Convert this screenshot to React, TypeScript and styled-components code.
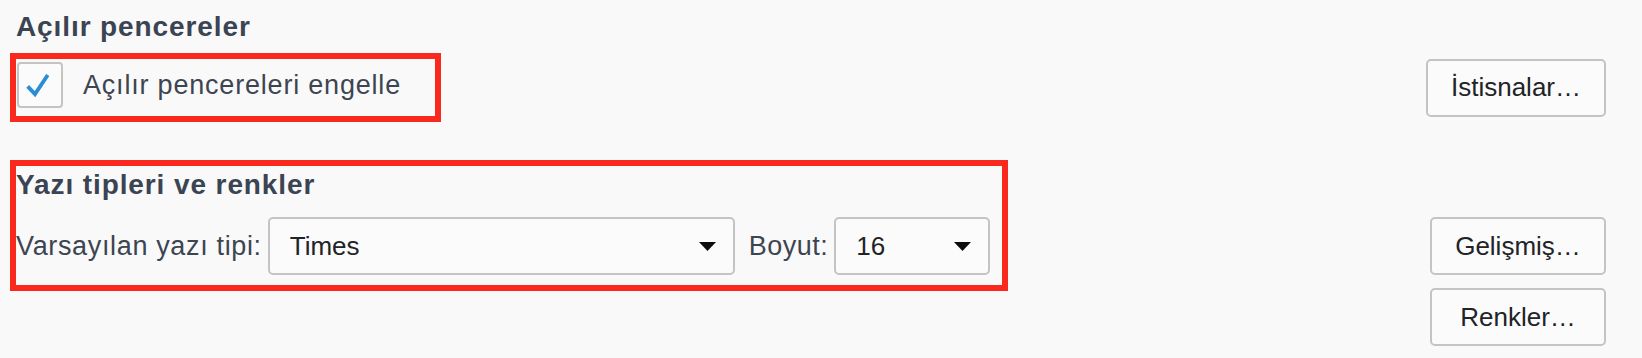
import styled, { createGlobalStyle } from "styled-components";

const GlobalStyle = createGlobalStyle`
  body {
    margin: 0;
    background: #f9f9fa;
    font-family: "Liberation Sans", Arial, sans-serif;
  }
`;

const Page = styled.main`
  padding: 10px 36px 0 10px;
`;

const Title = styled.h2<{ $indent?: number }>`
  margin: 0 0 0 ${(p) => p.$indent ?? 0}px;
  font-size: 28px;
  line-height: 34px;
  font-weight: 700;
  color: #3b4452;
  letter-spacing: 0.9px;
`;

const Row = styled.div<{ $top?: number; $align?: string }>`
  display: flex;
  justify-content: space-between;
  align-items: ${(p) => p.$align ?? "center"};
  margin-top: ${(p) => p.$top ?? 0}px;
`;

const Marked = styled.div<{ $pad: string }>`
  border: 6px solid #f92a1d;
  padding: ${(p) => p.$pad};
`;

const CheckRow = styled(Marked)`
  display: flex;
  align-items: center;
  gap: 20px;
`;

const Box = styled.span`
  display: flex;
  align-items: center;
  justify-content: center;
  width: 46px;
  height: 46px;
  box-sizing: border-box;
  border: 2px solid #c4c4c4;
  border-radius: 4px;
  background: #fbfbfb;
`;

const Label = styled.span<{ $spacing?: number }>`
  font-size: 27px;
  line-height: 34px;
  color: #3d4551;
  letter-spacing: ${(p) => p.$spacing ?? 0}px;
  white-space: nowrap;
`;

const FontGroup = styled(Marked)`
  display: flex;
  flex-direction: column;
  gap: 15px;
`;

const Fields = styled.div`
  display: flex;
  align-items: center;
`;

const Select = styled.div<{ $width: number; $gap: number }>`
  display: flex;
  align-items: center;
  justify-content: space-between;
  box-sizing: border-box;
  width: ${(p) => p.$width}px;
  height: 58px;
  margin: 0 ${(p) => p.$gap}px 0 6px;
  padding: 0 17px 0 20px;
  border: 2px solid #c4c4c4;
  border-radius: 5px;
  background: #fbfbfb;
  font-size: 26px;
  color: #222326;
`;

const Buttons = styled.div`
  display: flex;
  flex-direction: column;
  align-items: flex-end;
  gap: 13px;
  padding-top: 57px;
`;

const Button = styled.button<{ $width: number }>`
  box-sizing: border-box;
  width: ${(p) => p.$width}px;
  height: 58px;
  padding: 0;
  border: 2px solid #c4c4c4;
  border-radius: 5px;
  background: #fbfbfb;
  font-family: inherit;
  font-size: 26px;
  color: #222326;
`;

const Arrow = () => (
  <svg width="17" height="9" viewBox="0 0 17 9">
    <polygon points="0,0 17,0 8.5,9" fill="#0c0c0d" />
  </svg>
);

export default function App() {
  return (
    <>
      <GlobalStyle />
      <Page>
        <Title $indent={6}>Açılır pencereler</Title>

        <Row $top={9}>
          <CheckRow $pad="3px 34px 8px 1px">
            <Box>
              <svg width="46" height="46" viewBox="0 0 46 46">
                <polyline
                  points="10.5,23.5 18.5,32 32.5,11"
                  fill="none"
                  stroke="#2a8ed6"
                  strokeWidth="4.2"
                  transform="translate(-1,1)"
                />
              </svg>
            </Box>
            <Label $spacing={0.8}>Açılır pencereleri engelle</Label>
          </CheckRow>

          <Button $width={180}>İstisnalar…</Button>
        </Row>

        <Row $top={38} $align="flex-start">
          <FontGroup $pad="2px 12px 10px 0">
            <Title>Yazı tipleri ve renkler</Title>
            <Fields>
              <Label $spacing={0.65}>Varsayılan yazı tipi:</Label>
              <Select $width={467} $gap={14}>
                Times
                <Arrow />
              </Select>
              <Label $spacing={0.5}>Boyut:</Label>
              <Select $width={156} $gap={0}>
                16
                <Arrow />
              </Select>
            </Fields>
          </FontGroup>

          <Buttons>
            <Button $width={176}>Gelişmiş…</Button>
            <Button $width={176}>Renkler…</Button>
          </Buttons>
        </Row>
      </Page>
    </>
  );
}
